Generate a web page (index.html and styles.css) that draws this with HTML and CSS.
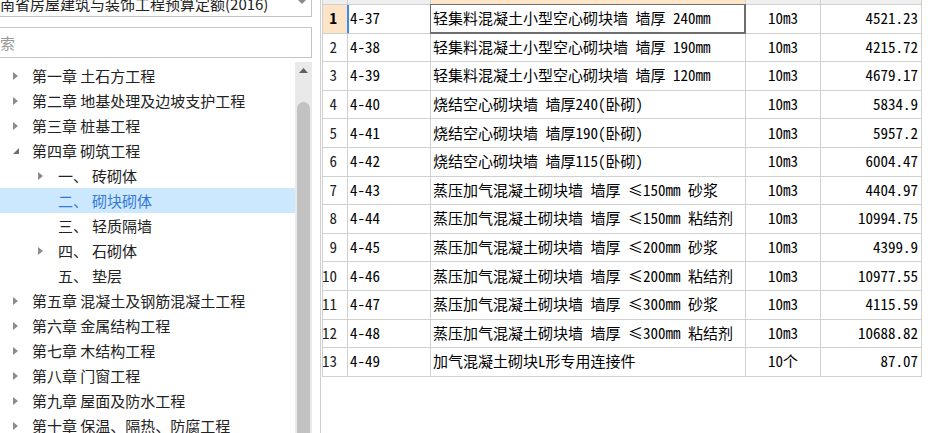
FILE: index.html
```html
<!DOCTYPE html>
<html lang="zh-CN">
<head>
<meta charset="utf-8">
<title>定额</title>
<link rel="stylesheet" href="styles.css">
</head>
<body>
<div class="app">
  <aside class="side">
    <div class="combo">
      <span class="combo-text">湖南省房屋建筑与装饰工程预算定额(2016)</span>
      <svg class="combo-arrow" width="8" height="4" viewBox="0 0 8 4"><path d="M0 0H8L4 4Z" fill="#8a8a8a"/></svg>
    </div>
    <div class="search">搜索</div>
    <div class="tree-wrap">
      <ul class="tree">
        <li class="node"><span class="tw"><svg width="5" height="8" viewBox="0 0 5 8"><path d="M0 0L5 4L0 8Z" fill="#8c8c8c"/></svg></span>第一章 土石方工程</li>
        <li class="node"><span class="tw"><svg width="5" height="8" viewBox="0 0 5 8"><path d="M0 0L5 4L0 8Z" fill="#8c8c8c"/></svg></span>第二章 地基处理及边坡支护工程</li>
        <li class="node"><span class="tw"><svg width="5" height="8" viewBox="0 0 5 8"><path d="M0 0L5 4L0 8Z" fill="#8c8c8c"/></svg></span>第三章 桩基工程</li>
        <li class="node"><span class="tw"><svg width="6" height="6" viewBox="0 0 6 6"><path d="M6 0V6H0Z" fill="#6f6f6f"/></svg></span>第四章 砌筑工程</li>
        <li class="node sub"><span class="tw"><svg width="5" height="8" viewBox="0 0 5 8"><path d="M0 0L5 4L0 8Z" fill="#8c8c8c"/></svg></span><span class="num">一、</span>砖砌体</li>
        <li class="node sub sel"><span class="tw"></span><span class="num">二、</span>砌块砌体</li>
        <li class="node sub"><span class="tw"></span><span class="num">三、</span>轻质隔墙</li>
        <li class="node sub"><span class="tw"><svg width="5" height="8" viewBox="0 0 5 8"><path d="M0 0L5 4L0 8Z" fill="#8c8c8c"/></svg></span><span class="num">四、</span>石砌体</li>
        <li class="node sub"><span class="tw"></span><span class="num">五、</span>垫层</li>
        <li class="node"><span class="tw"><svg width="5" height="8" viewBox="0 0 5 8"><path d="M0 0L5 4L0 8Z" fill="#8c8c8c"/></svg></span>第五章 混凝土及钢筋混凝土工程</li>
        <li class="node"><span class="tw"><svg width="5" height="8" viewBox="0 0 5 8"><path d="M0 0L5 4L0 8Z" fill="#8c8c8c"/></svg></span>第六章 金属结构工程</li>
        <li class="node"><span class="tw"><svg width="5" height="8" viewBox="0 0 5 8"><path d="M0 0L5 4L0 8Z" fill="#8c8c8c"/></svg></span>第七章 木结构工程</li>
        <li class="node"><span class="tw"><svg width="5" height="8" viewBox="0 0 5 8"><path d="M0 0L5 4L0 8Z" fill="#8c8c8c"/></svg></span>第八章 门窗工程</li>
        <li class="node"><span class="tw"><svg width="5" height="8" viewBox="0 0 5 8"><path d="M0 0L5 4L0 8Z" fill="#8c8c8c"/></svg></span>第九章 屋面及防水工程</li>
        <li class="node"><span class="tw"><svg width="5" height="8" viewBox="0 0 5 8"><path d="M0 0L5 4L0 8Z" fill="#8c8c8c"/></svg></span>第十章 保温、隔热、防腐工程</li>
      </ul>
      <div class="vscroll">
        <svg class="vs-up" width="9" height="5" viewBox="0 0 9 5"><path d="M0 5L4.5 0L9 5Z" fill="#606060"/></svg>
        <div class="vs-thumb"></div>
      </div>
    </div>
  </aside>

  <main class="pane">
    <div class="table">
      <div class="row head"><div class="c"></div><div class="c"></div><div class="c hsel"></div><div class="c"></div><div class="c"></div></div>
      <div class="row"><div class="c rn cur">1</div><div class="c code cur">4-37</div><div class="c desc selcell">轻集料混凝土小型空心砌块墙 墙厚 240mm</div><div class="c unit">10m3</div><div class="c price">4521.23</div></div>
      <div class="row"><div class="c rn">2</div><div class="c code">4-38</div><div class="c desc">轻集料混凝土小型空心砌块墙 墙厚 190mm</div><div class="c unit">10m3</div><div class="c price">4215.72</div></div>
      <div class="row"><div class="c rn">3</div><div class="c code">4-39</div><div class="c desc">轻集料混凝土小型空心砌块墙 墙厚 120mm</div><div class="c unit">10m3</div><div class="c price">4679.17</div></div>
      <div class="row"><div class="c rn">4</div><div class="c code">4-40</div><div class="c desc">烧结空心砌块墙 墙厚240(卧砌)</div><div class="c unit">10m3</div><div class="c price">5834.9</div></div>
      <div class="row"><div class="c rn">5</div><div class="c code">4-41</div><div class="c desc">烧结空心砌块墙 墙厚190(卧砌)</div><div class="c unit">10m3</div><div class="c price">5957.2</div></div>
      <div class="row"><div class="c rn">6</div><div class="c code">4-42</div><div class="c desc">烧结空心砌块墙 墙厚115(卧砌)</div><div class="c unit">10m3</div><div class="c price">6004.47</div></div>
      <div class="row"><div class="c rn">7</div><div class="c code">4-43</div><div class="c desc">蒸压加气混凝土砌块墙 墙厚 ≤150mm 砂浆</div><div class="c unit">10m3</div><div class="c price">4404.97</div></div>
      <div class="row"><div class="c rn">8</div><div class="c code">4-44</div><div class="c desc">蒸压加气混凝土砌块墙 墙厚 ≤150mm 粘结剂</div><div class="c unit">10m3</div><div class="c price">10994.75</div></div>
      <div class="row"><div class="c rn">9</div><div class="c code">4-45</div><div class="c desc">蒸压加气混凝土砌块墙 墙厚 ≤200mm 砂浆</div><div class="c unit">10m3</div><div class="c price">4399.9</div></div>
      <div class="row"><div class="c rn">10</div><div class="c code">4-46</div><div class="c desc">蒸压加气混凝土砌块墙 墙厚 ≤200mm 粘结剂</div><div class="c unit">10m3</div><div class="c price">10977.55</div></div>
      <div class="row"><div class="c rn">11</div><div class="c code">4-47</div><div class="c desc">蒸压加气混凝土砌块墙 墙厚 ≤300mm 砂浆</div><div class="c unit">10m3</div><div class="c price">4115.59</div></div>
      <div class="row"><div class="c rn">12</div><div class="c code">4-48</div><div class="c desc">蒸压加气混凝土砌块墙 墙厚 ≤300mm 粘结剂</div><div class="c unit">10m3</div><div class="c price">10688.82</div></div>
      <div class="row"><div class="c rn">13</div><div class="c code">4-49</div><div class="c desc">加气混凝土砌块L形专用连接件</div><div class="c unit">10个</div><div class="c price">87.07</div></div>
    </div>
  </main>
</div>
</body>
</html>
```

FILE: styles.css
```css
* { box-sizing: border-box; margin: 0; padding: 0; }

html, body {
  height: 100%;
  overflow: hidden;
  background: #fff;
}

body {
  font-family: "Noto Sans CJK SC", "Microsoft YaHei", sans-serif;
  color: #222;
}

.app {
  display: flex;
  height: 100vh;
}

/* ---------- left side ---------- */
.side {
  flex: none;
  width: 334px;
  margin-left: -22px;
  display: flex;
  flex-direction: column;
}

.combo {
  height: 27px;
  margin-top: -10px;
  border: 1px solid #c4c4c4;
  display: flex;
  align-items: center;
  padding: 0 5px 0 6px;
  font-size: 15px;
  color: #222;
}

.combo-text {
  flex: 1;
  line-height: 20px;
  white-space: nowrap;
  overflow: hidden;
}

.combo-arrow {
  flex: none;
  margin-top: -3px;
}

.search {
  margin-top: 10px;
  height: 31px;
  border: 1px solid #c4c4c4;
  padding-left: 6px;
  display: flex;
  align-items: center;
  font-size: 15px;
  color: #9a9a9a;
}

.tree-wrap {
  flex: 1;
  min-height: 0;
  margin-top: 4px;
  display: flex;
  overflow: hidden;
}

.tree {
  flex: 1;
  list-style: none;
  padding-top: 1px;
  font-size: 15px;
  color: #222;
}

.node {
  height: 25px;
  display: flex;
  align-items: center;
  padding-left: 35px;
  white-space: nowrap;
  line-height: 20px;
}

.tw {
  flex: none;
  width: 19px;
  display: flex;
  align-items: center;
}

.node.sub { padding-left: 60px; }
.node.sub .tw { width: 20px; }
.num { margin-right: 4px; }

.node.sel {
  background: #cce8ff;
  color: #3478d8;
}

.vscroll {
  flex: none;
  width: 17px;
  background: #e9e9e9;
  display: flex;
  flex-direction: column;
  align-items: center;
}

.vs-up {
  margin-top: 6px;
  flex: none;
}

.vs-thumb {
  margin-top: 29px;
  flex: 1;
  width: 13px;
  background: #c2c2c2;
  border-radius: 7px 7px 0 0;
}

/* ---------- grid ---------- */
.pane {
  flex: 1;
  margin-left: 8px;
  border-left: 1px solid #cfcfcf;
}

.table {
  margin-left: 1px;
  width: 600px;
  border-left: 1px solid #d0d0d0;
  font-family: "Noto Sans CJK SC", sans-serif;
  font-feature-settings: "hwid" 1;
  font-size: 15px;
  color: #000;
}

.row {
  display: grid;
  grid-template-columns: 25px 83px 315px 75px 101px;
  height: 28.6px;
}

.row.head {
  height: 29px;
  margin-top: -24px;
}

.c {
  border-right: 1px solid #d0d0d0;
  border-bottom: 1px solid #d0d0d0;
  display: flex;
  align-items: center;
  white-space: nowrap;
  overflow: hidden;
  line-height: 18px;
  padding-bottom: 1px;
}

.head .c { background: #efefef; }
.head .c.hsel { background: #fde5c8; }

.rn {
  justify-content: flex-end;
  padding-right: 10px;
  color: #222;
}

.rn.cur {
  background: #fde4c6;
  font-weight: 700;
  color: #000;
  border-right-color: #3d8af7;
}

.code { padding-left: 2px; }
.code.cur { box-shadow: inset 1px 0 0 #3d8af7; }

.desc { padding-left: 2px; }

.selcell {
  position: relative;
  overflow: visible;
}

.selcell::after {
  content: "";
  position: absolute;
  left: -1px;
  top: -1px;
  right: -1px;
  bottom: -1px;
  border: 1px solid #6e6e6e;
  border-right-width: 2px;
  border-bottom-width: 2px;
  pointer-events: none;
}

.unit { justify-content: center; }

.price {
  justify-content: flex-end;
  padding-right: 3px;
}
```
